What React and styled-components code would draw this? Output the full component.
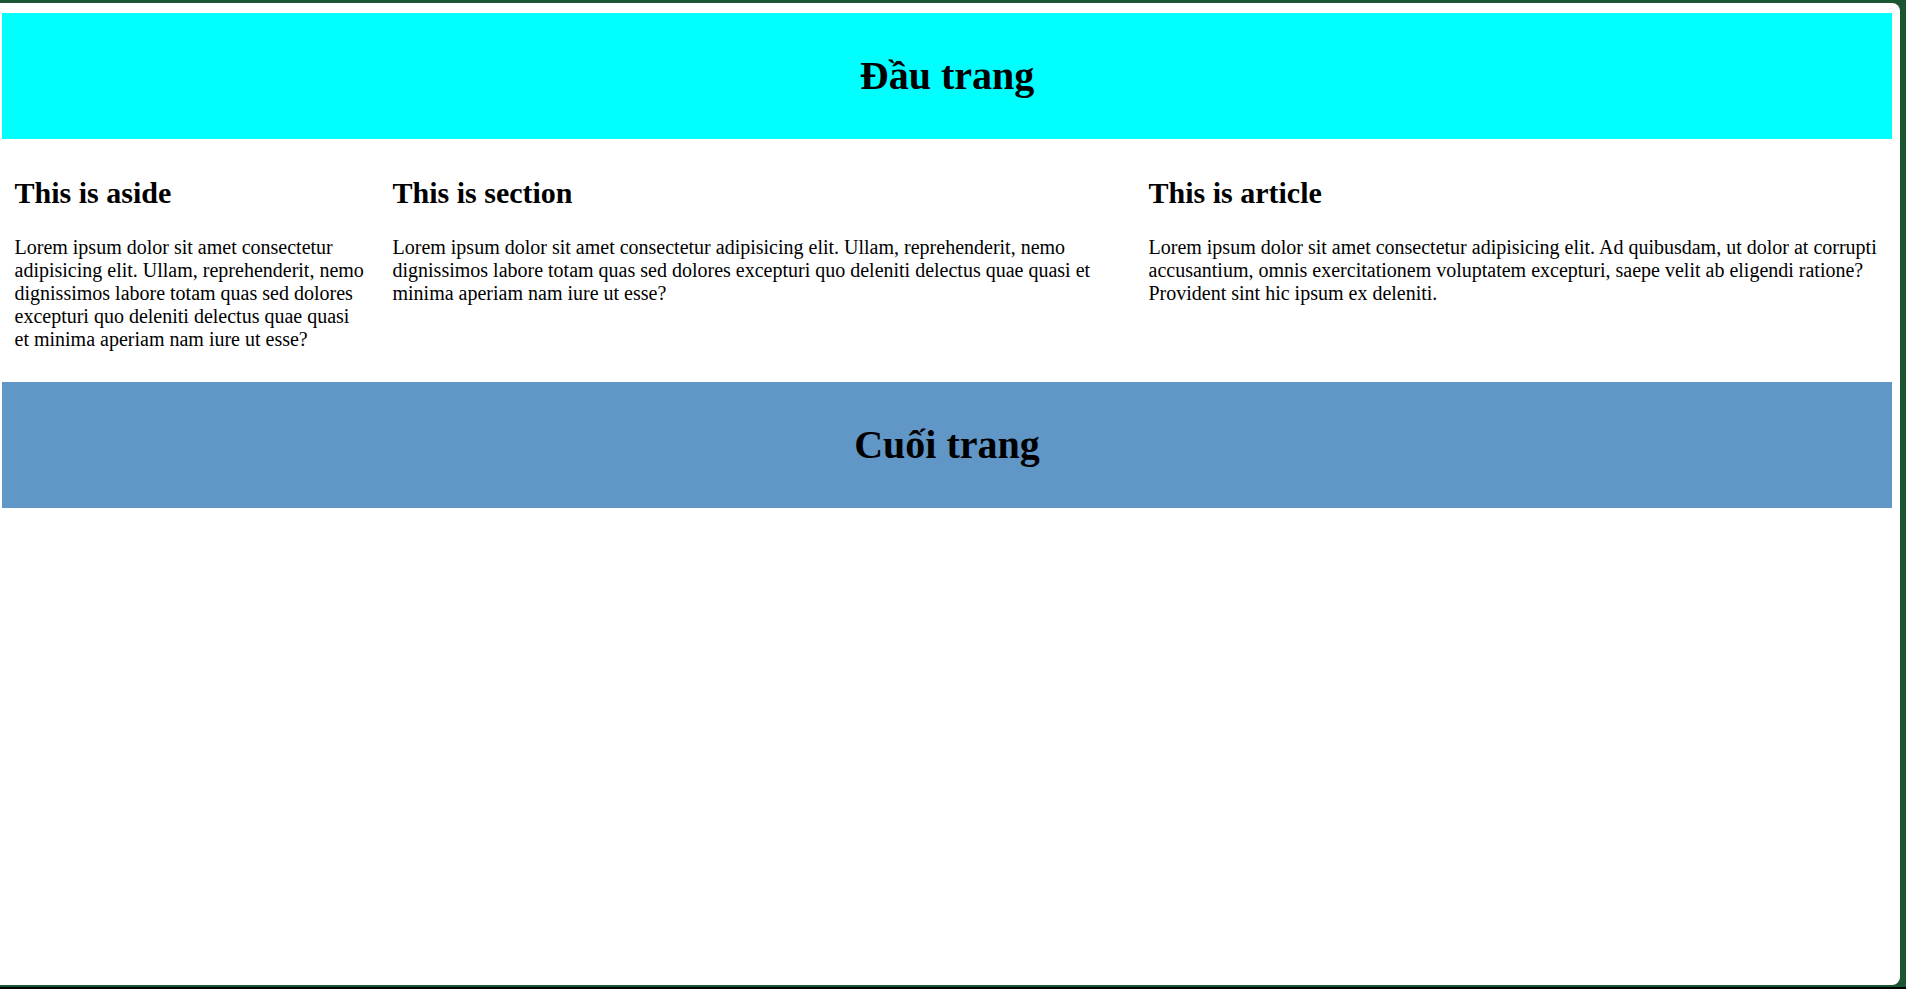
import React from "react";
import styled, { createGlobalStyle } from "styled-components";

const Global = createGlobalStyle`
  html, body { margin: 0; padding: 0; }
  body {
    background: #1a5632;
    font-family: "Liberation Serif", "Times New Roman", serif;
    color: #000;
  }
  #root { min-height: 989px; }
`;

const Desktop = styled.div`
  box-sizing: border-box;
  height: 989px;
  background: #1a5632;
  border-bottom: 2px solid #000;
  padding: 3px 6px 2px 0;
  display: flex;
`;

const Window = styled.div`
  box-sizing: border-box;
  flex: 1;
  background: #fff;
  border-radius: 0 8px 8px 0;
  padding: 10px 8px 0 2px;
  overflow: hidden;
`;

const Band = styled.div`
  background: ${(p) => p.$bg};
  padding: 13px 0;
  text-align: center;
  display: flow-root;
`;

const BandTitle = styled.h1`
  margin: 26.8px 0;
  font-size: 40px;
  font-weight: bold;
  line-height: 46px;
`;

const Columns = styled.div`
  display: grid;
  grid-template-columns: 20% 40% 40%;
`;

const Column = styled.div`
  padding: 12.5px 12.5px 11.5px;
  display: flow-root;
`;

const ColTitle = styled.h2`
  margin: 25px 0;
  font-size: 30px;
  font-weight: bold;
  line-height: 34.5px;
`;

const ColText = styled.p`
  margin: 20px 0;
  font-size: 20px;
  line-height: 23px;
`;

const cols = [
  {
    title: "This is aside",
    text:
      "Lorem ipsum dolor sit amet consectetur adipisicing elit. Ullam, reprehenderit, nemo dignissimos labore totam quas sed dolores excepturi quo deleniti delectus quae quasi et minima aperiam nam iure ut esse?",
  },
  {
    title: "This is section",
    text:
      "Lorem ipsum dolor sit amet consectetur adipisicing elit. Ullam, reprehenderit, nemo dignissimos labore totam quas sed dolores excepturi quo deleniti delectus quae quasi et minima aperiam nam iure ut esse?",
  },
  {
    title: "This is article",
    text:
      "Lorem ipsum dolor sit amet consectetur adipisicing elit. Ad quibusdam, ut dolor at corrupti accusantium, omnis exercitationem voluptatem excepturi, saepe velit ab eligendi ratione? Provident sint hic ipsum ex deleniti.",
  },
];

export default function App() {
  return (
    <>
      <Global />
      <Desktop>
        <Window>
          <Band $bg="#00ffff">
            <BandTitle>Đầu trang</BandTitle>
          </Band>
          <Columns>
            {cols.map((c) => (
              <Column key={c.title}>
                <ColTitle>{c.title}</ColTitle>
                <ColText>{c.text}</ColText>
              </Column>
            ))}
          </Columns>
          <Band $bg="#6197c6">
            <BandTitle>Cuối trang</BandTitle>
          </Band>
        </Window>
      </Desktop>
    </>
  );
}
